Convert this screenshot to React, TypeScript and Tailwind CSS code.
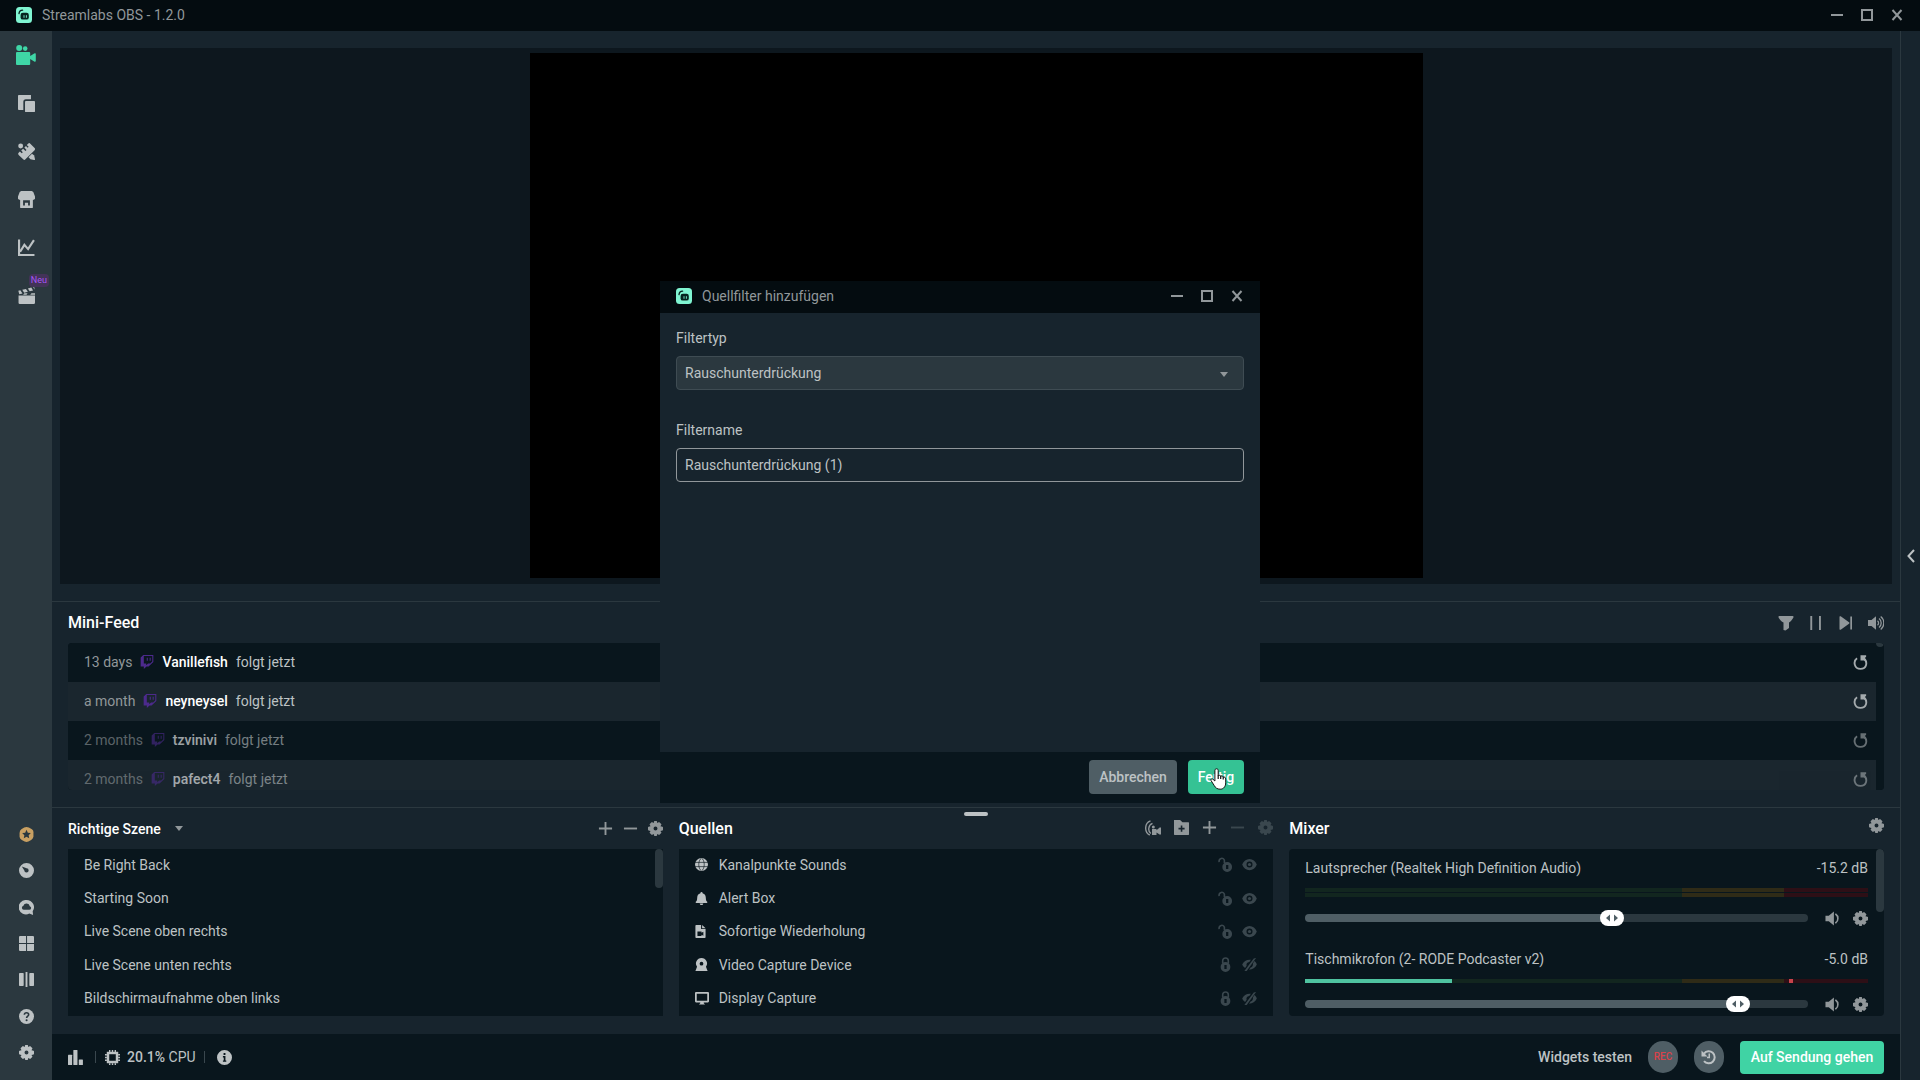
import { useState, type ReactNode } from "react";
import { FaTwitch } from "react-icons/fa";

type IconProps = { className?: string };

function Svg({ className = "size-4", children }: { className?: string; children: ReactNode }) {
  return (
    <svg viewBox="0 0 16 16" fill="currentColor" className={`shrink-0 ${className}`} aria-hidden="true">
      {children}
    </svg>
  );
}

const Logo = () => (
  <Svg className="size-4">
    <rect width="16" height="16" rx="3.5" fill="#80f5d2" />
    <rect x="4.6" y="5.8" width="8.2" height="6.8" rx="2.2" fill="#07241f" />
    <path d="M3 6.6C3.2 4.6 4.6 3.3 6.6 3.2" fill="none" stroke="#07241f" strokeWidth="1.3" strokeLinecap="round" />
    <path d="M8 8.6v1.8M10.4 8.6v1.8" stroke="#80f5d2" strokeWidth="0.9" strokeLinecap="round" />
  </Svg>
);

const Camera = () => (
  <svg viewBox="0 0 20 20" fill="currentColor" className="h-5 w-5" aria-hidden="true">
    <circle cx="3.2" cy="3" r="3" />
    <circle cx="9.2" cy="3.6" r="2.3" />
    <path d="M1 7h12.200a1 1 0 0 1 1 1v3l4-2.600a1 1 0 0 1 1.600.8v6.600a1 1 0 0 1-1.600.8l-4-2.600v5a1 1 0 0 1-1 1H1a1 1 0 0 1-1-1V8a1 1 0 0 1 1-1z" />
  </svg>
);

const Copy = () => (
  <Svg className="size-[17px]">
    <path d="M.8 0h11.400v4H7.400A2.400 2.400 0 0 0 5 6.400V14H.8a.8.8 0 0 1-.8-.8V.8A.8.8 0 0 1 .8 0z" />
    <rect x="6.600" y="5.600" width="9.400" height="10.400" rx=".8" />
  </Svg>
);

const Tools = () => (
  <Svg className="size-[17px]">
    <path d="M9.500.6a1.500 1.500 0 0 1 2.100 0l4 4.200a1.500 1.500 0 0 1 0 2L7 15.400a1.500 1.500 0 0 1-2.100 0L.6 11.200a1.500 1.500 0 0 1 0-2l1.200-1.100 1.700 1.500 1-.9-1.500-1.700L4.800 5.300 7 7.500l1-1L6 4.300l1.500-1.500 1.600 1.600.9-.9-1.700-1.700z" />
    <circle cx="2.500" cy="2.800" r="2.300" />
    <path d="M13.200 10l2 1.800.8 3.400a.8.8 0 0 1-.8.800l-3.500-.8L9.900 13.400z" />
  </Svg>
);

const Store = () => (
  <Svg className="size-[17px]">
    <path
      fillRule="evenodd"
      d="M3 0h10l1.400 1L16 5.200A2.600 2.600 0 0 1 14 8.500v6.700a.8.8 0 0 1-.8.8H2.800a.8.8 0 0 1-.8-.8V8.500A2.600 2.600 0 0 1 0 5.200L1.600 1zM4.800 8.700v5h1.700v-2.700h3v2.700h1.700v-5z"
    />
  </Svg>
);

const Chart = () => (
  <Svg className="size-[17px]">
    <path d="M1 .5V15h14.500M2 12l4-6.500L9.500 9.500 15 1" fill="none" stroke="currentColor" strokeWidth="2" />
  </Svg>
);

const Clapper = () => (
  <Svg className="size-[17px]">
    <path d="M.5 8h15.500v6.800a1.200 1.200 0 0 1-1.200 1.200H1.700A1.200 1.200 0 0 1 .5 14.800z" />
    <path d="M.3 3.600 2.200 3.100 4.200 6 1.200 6.800zM4 2.700 7.500 1.800 9.300 4.500 5.800 5.500zM9.300 1.300 12.500.5 14.200 3.200 11 4.100zM14.200.2 15.200 0 15.800 2.700z" />
    <path d="M.5 7.200h4.300l1.200-1.300h3L8 7.200h3.500l1.200-1.400H16v1.400z" />
  </Svg>
);

const Prime = () => (
  <Svg className="size-[15px]">
    <path fillRule="evenodd" d="M5.500.6Q8-.6 10.500.6l3.300 1.900Q15.800 4 15.400 6.500v4Q15 12.700 13 13.800l-3 1.700q-2 1-4 0l-3-1.700Q.6 12.500.6 10.300v-4Q.7 4 2.500 2.500zM8 3 6.600 6l-3.200.4 2.300 2.300-.6 3.200L8 10.400l2.900 1.500-.6-3.200 2.300-2.300L9.400 6z" />
  </Svg>
);

const Dashboard = () => (
  <Svg className="size-[15px]">
    <path fillRule="evenodd" d="M8 0a8 8 0 1 1 0 16A8 8 0 0 1 8 0zM3 3.600 5.700 7.900a2.300 2.300 0 1 0 2.400-2.300z" />
  </Svg>
);

const Cloud = () => (
  <Svg className="size-[15px]">
    <path fillRule="evenodd" d="M8 0a8 7.700 0 0 1 6.600 12L15 16l-4-1.500A7.800 7.700 0 1 1 8 0zM5 10.500h6a2 2 0 0 0 .5-3.900 3.500 3.500 0 0 0-6.800-.4A2.200 2.200 0 0 0 5 10.500z" />
  </Svg>
);

const Grid = () => (
  <Svg className="size-[15px]">
    <path d="M.8 0H7.500v7.400H0V.8zM8.600 0h6.600l.8.8v6.600H8.600zM0 8.500h7.500V16H.8l-.8-.8zM8.600 8.500H16v6.700l-.8.8H8.600z" />
  </Svg>
);

const Columns = () => (
  <Svg className="size-[15px]">
    <rect y="1" width="5" height="14" rx=".8" />
    <rect x="7" width="2" height="16" />
    <rect x="11" y="1" width="5" height="14" rx=".8" />
  </Svg>
);

const Help = () => (
  <Svg className="size-[15px]">
    <circle cx="8" cy="8" r="8" />
    <path d="M5.700 6.200C5.800 4.600 6.800 4 8 4s2.300.8 2.300 2c0 1.600-2.200 1.700-2.200 3.600" fill="none" stroke="#2b383f" strokeWidth="1.700" />
    <circle cx="8.100" cy="12" r="1.100" fill="#2b383f" />
  </Svg>
);

const Gear = ({ className = "size-[15px]" }: IconProps) => (
  <Svg className={className}>
    <path fillRule="evenodd" d="M6.600 0h2.800l.5 2.100 1.900-1.100 2.600 2.500-1.100 2 2.200.6.500.6v2.700l-.4.600-2.300.6 1.100 2-2.500 2.400-2-1.100L9.300 16H6.700L6.100 13.900 4.100 15l-2.500-2.400 1.100-2L.5 10 0 9.400V6.700l.5-.6L2.700 5.500 1.600 3.500l2.500-2.500 2 1.100zM8 5.900a2.100 2.100 0 1 0 0 4.200 2.100 2.100 0 0 0 0-4.200z" />
  </Svg>
);

const Plus = () => (
  <Svg className="size-[15px]">
    <path d="M7 1h2v6h6v2H9v6H7V9H1V7h6z" />
  </Svg>
);

const Minus = () => (
  <Svg className="size-[15px]">
    <path d="M1 7h14v2H1z" />
  </Svg>
);

const Filter = () => (
  <Svg>
    <path d="M1.200 1h13.600a.8.8 0 0 1 .7 1.200C14.300 5 12.500 6.500 11 7.500V13l-3.500 2.600-2-.6V7.500C3.500 6.500 1.700 5 .5 2.200A.8.8 0 0 1 1.200 1z" />
  </Svg>
);

const Pause = () => (
  <Svg>
    <path d="M2.300 1h1.900v14H2.300zM11 1h1.900v14H11z" />
  </Svg>
);

const Skip = () => (
  <Svg>
    <path d="M1.500 2a.8.8 0 0 1 1.200-.7L11 7.300a.8.8 0 0 1 0 1.400l-8.300 6a.8.8 0 0 1-1.200-.7zM12.300 1.500H14v13h-1.700z" />
  </Svg>
);

const Volume = () => (
  <Svg>
    <path d="M0 5h3.500L8 1.300V14.700L3.500 11H0z" />
    <path d="M9.500 5.700a3 3 0 0 1 0 4.600M11 3.600a5.500 5.500 0 0 1 0 8.800M12.700 1.500a8.300 8.300 0 0 1 0 13" fill="none" stroke="currentColor" strokeWidth="1.300" />
  </Svg>
);

const Speaker = () => (
  <Svg className="size-[15px]">
    <path d="M.5 5H4l5.500-4.500v15L4 11H.5z" />
    <path d="M11.500 3.500c3 2 3 7 0 9" fill="none" stroke="currentColor" strokeWidth="1.700" strokeLinecap="round" />
  </Svg>
);

const Replay = () => (
  <Svg className="size-[15px]">
    <path d="M4.300 3.500C0 6.500 1 14.800 8 14.800c6.500 0 7.800-7 4-10.500" fill="none" stroke="currentColor" strokeWidth="2" />
    <path d="M8 .3h6v1.500L12.700 3.200 14.200 5v.8H8z" />
  </Svg>
);

const Globe = () => (
  <Svg className="size-[13px]">
    <circle cx="8" cy="8" r="8" />
    <path d="M0 5.400h16M0 10.600h16M8 0C3.500 3 3.500 13 8 16M8 0c4.500 3 4.500 13 0 16" fill="none" stroke="#09161d" strokeWidth="0.800" />
  </Svg>
);

const Bell = () => (
  <Svg className="size-[13px]">
    <path d="M8 0a1.300 1.300 0 0 1 1.300 1.500C12 2.200 13.300 4.300 13.300 7c0 3 .7 4 1.700 5a.9.9 0 0 1-.6 1.500H1.600A.9.9 0 0 1 1 12c1-1 1.700-2 1.700-5 0-2.700 1.300-4.800 4-5.500A1.300 1.300 0 0 1 8 0zM5.800 14.300h4.400a2.200 1.900 0 0 1-4.400 0z" />
  </Svg>
);

const ReplayFile = () => (
  <Svg className="size-[13px]">
    <path fillRule="evenodd" d="M1.500 0H7.500v5h5.500v10a1 1 0 0 1-1 1H1.500a1 1 0 0 1-1-1V1a1 1 0 0 1 1-1zM3 8v5.500h5V12l2.300 1.300V8.200L8 9.500V8z" />
    <path d="M8.800 0 13 3.900H8.800z" />
  </Svg>
);

const Webcam = () => (
  <Svg className="size-[13px]">
    <path fillRule="evenodd" d="M8 0a6.800 6.800 0 0 1 5.500 10.800l2 5.200H.5l2-5.200A6.800 6.800 0 0 1 8 0zM8 4.700a2.300 2.300 0 1 0 0 4.600A2.300 2.300 0 0 0 8 4.700z" />
  </Svg>
);

const Monitor = () => (
  <Svg className="size-[14px]">
    <path fillRule="evenodd" d="M1.200 1h13.600A1.200 1.200 0 0 1 16 2.200v9.600a1.200 1.200 0 0 1-1.200 1.200H10v1l1.500 1.500H4.500L6 14v-1H1.200A1.200 1.200 0 0 1 0 11.800V2.200A1.200 1.200 0 0 1 1.200 1zm.8 2v8h12V3z" />
  </Svg>
);

const Unlocked = () => (
  <Svg className="size-[15px]">
    <path d="M1.200 5.500C.5 1 6 0 6.800 3.500v3" fill="none" stroke="currentColor" strokeWidth="1.700" />
    <path fillRule="evenodd" d="M9.800 5.300a5.200 5.300 0 1 1 0 10.600 5.200 5.300 0 0 1 0-10.600zm-1.200 3.200v4.200h2.400v-4.200z" />
  </Svg>
);

const Locked = () => (
  <Svg className="size-[15px]">
    <path d="M5 7V4c0-4 6-4 6 0v3" fill="none" stroke="currentColor" strokeWidth="1.700" />
    <path fillRule="evenodd" d="M8 5.300a5.200 5.300 0 1 1 0 10.600A5.200 5.300 0 0 1 8 5.300zm-1.200 3.200v4.200h2.400v-4.200z" />
  </Svg>
);

const Eye = () => (
  <Svg className="size-[15px]">
    <path fillRule="evenodd" d="M8 2c3.600 0 6.300 2.200 7.800 6-1.500 3.800-4.200 6-7.800 6S1.700 11.800.2 8C1.700 4.200 4.400 2 8 2zM8 4.800a3.200 3.200 0 1 0 0 6.400 3.200 3.200 0 0 0 0-6.400z" />
    <circle cx="8" cy="8" r="1.700" />
  </Svg>
);

const EyeOff = () => (
  <Svg className="size-[15px]">
    <path d="M12.500 1.500 15 1 5 15H2.500zM.2 8C2 4.500 5 2.500 9.500 3L7.800 5.200C5 5.500 4.300 8 5 9.200L3.300 11.700C2 11 .8 9.500.2 8zM13.200 4.300C14.500 5.200 15.400 6.500 15.800 8c-1.600 3.500-4.500 5.500-8.300 5.500l1.700-2.400C11.200 10.800 12 9 11.600 7z" />
  </Svg>
);

const StreamCam = () => (
  <Svg className="size-4">
    <path d="M5.500.8C-.8 3-.8 12.500 4.800 15M7.500 3.300c-4.500 1.700-4.800 8-1.700 10.200" fill="none" stroke="currentColor" strokeWidth="1.400" />
    <circle cx="8.300" cy="7" r="1.500" />
    <path d="M7 9h4.500v1.300L15 7.200l1 .5v6.600l-1 .5-3.500-2.300V15H7z" />
  </Svg>
);

const FolderAdd = () => (
  <Svg className="size-[15px]">
    <path fillRule="evenodd" d="M0 0h6.500L9 2.500h6.500L16 3v12.500l-.5.500H.5L0 15.500zM7.200 5.800v2.500H4.800v1.700h2.400v2.500h1.700V10h2.400V8.300H8.900V5.800z" />
  </Svg>
);

const Bars = () => (
  <Svg className="size-[15px]">
    <rect y="5" width="4.400" height="11" rx=".6" />
    <rect x="5.700" width="4.400" height="16" rx=".6" />
    <rect x="11.500" y="10" width="4.400" height="6" rx=".6" />
  </Svg>
);

const Chip = () => (
  <Svg className="size-[15px]">
    <rect x="3.200" y="3.200" width="9.600" height="9.600" fill="none" stroke="currentColor" strokeWidth="2.600" />
    <path d="M5 0v2M8 0v2M11 0v2M5 14v2M8 14v2M11 14v2M0 5h2M0 8h2M0 11h2M14 5h2M14 8h2M14 11h2" stroke="currentColor" strokeWidth="1.500" fill="none" />
  </Svg>
);

const Info = () => (
  <Svg className="size-[15px]">
    <path fillRule="evenodd" d="M8 0a8 8 0 1 1 0 16A8 8 0 0 1 8 0zM7 3.200v2h2v-2zM6.300 6.500v1.400h.9v3.300h-.9v1.400h3.600v-1.400H9V6.500z" />
  </Svg>
);

const History = () => (
  <Svg>
    <path d="M3 4.500A6 6 0 1 1 3 12" fill="none" stroke="currentColor" strokeWidth="2" />
    <path d="M.5 1.500v6h6zM7.500 4.500H9v4.700H6V7.800h1.500z" />
  </Svg>
);

const Caret = () => (
  <svg viewBox="0 0 10 6" fill="#91979a" className="h-[5px] w-2" aria-hidden="true">
    <path d="M0 0h10L5 6z" />
  </svg>
);

const topNav = [
  { label: "Editor", icon: <Camera />, active: true },
  { label: "Layout", icon: <Copy /> },
  { label: "Themes", icon: <Tools /> },
  { label: "App Store", icon: <Store /> },
  { label: "Statistik", icon: <Chart /> },
  { label: "Highlighter", icon: <Clapper />, badge: "Neu" },
];

const bottomNav = [
  { label: "Prime", icon: <Prime />, prime: true },
  { label: "Dashboard", icon: <Dashboard /> },
  { label: "Cloudbot", icon: <Cloud /> },
  { label: "Layout-Editor", icon: <Grid /> },
  { label: "Studio-Modus", icon: <Columns /> },
  { label: "Hilfe", icon: <Help /> },
  { label: "Einstellungen", icon: <Gear /> },
];

const feed = [
  { time: "13 days", name: "Vanillefish", faded: false },
  { time: "a month", name: "neyneysel", faded: false },
  { time: "2 months", name: "tzvinivi", faded: true },
  { time: "2 months", name: "pafect4", faded: true },
];

const scenes = ["Be Right Back", "Starting Soon", "Live Scene oben rechts", "Live Scene unten rechts", "Bildschirmaufnahme oben links"];

const sources = [
  { name: "Kanalpunkte Sounds", icon: <Globe />, locked: false },
  { name: "Alert Box", icon: <Bell />, locked: false },
  { name: "Sofortige Wiederholung", icon: <ReplayFile />, locked: false },
  { name: "Video Capture Device", icon: <Webcam />, locked: true },
  { name: "Display Capture", icon: <Monitor />, locked: true },
];

function IconButton({ label, dim, children }: { label: string; dim?: boolean; children: ReactNode }) {
  return (
    <button type="button" aria-label={label} className={dim ? "text-[#3a474e]" : "text-[#91979a]"}>
      {children}
    </button>
  );
}

function WindowControls() {
  return (
    <div className="flex items-center gap-[18px] text-[#91979a]">
      <button type="button" aria-label="Minimieren">
        <svg viewBox="0 0 12 12" className="size-3"><path d="M0 6h12" stroke="currentColor" strokeWidth="2" /></svg>
      </button>
      <button type="button" aria-label="Maximieren">
        <svg viewBox="0 0 12 12" className="size-3"><path d="M1 1h10v10H1z" fill="none" stroke="currentColor" strokeWidth="2" /></svg>
      </button>
      <button type="button" aria-label="Schließen">
        <svg viewBox="0 0 12 12" className="size-3"><path d="M1.500 1l9 10M10.500 1l-9 10" stroke="currentColor" strokeWidth="2" /></svg>
      </button>
    </div>
  );
}

function SideNav() {
  return (
    <nav className="flex w-[52px] shrink-0 flex-col justify-between bg-[#2b383f] pb-[9px] text-[#bdc2c4]">
      <div className="flex flex-col">
        {topNav.map((item) => (
          <button
            key={item.label}
            type="button"
            aria-label={item.label}
            className={`relative flex h-12 items-center justify-center ${item.active ? "text-[#3fd6a6]" : ""}`}
          >
            {item.icon}
            {item.badge && (
              <span className="absolute top-[3px] right-[3px] rounded-sm bg-[#433358] px-[2px] text-[9px] leading-[13px] text-[#a855f7]">
                {item.badge}
              </span>
            )}
          </button>
        ))}
      </div>
      <div className="flex h-[255px] flex-col">
        {bottomNav.map((item) => (
          <button
            key={item.label}
            type="button"
            aria-label={item.label}
            className={`flex flex-1 items-center justify-center ${item.prime ? "text-[#c9a062]" : ""}`}
          >
            {item.icon}
          </button>
        ))}
      </div>
    </nav>
  );
}

function MiniFeed() {
  return (
    <section className="border-t border-[#2b383f] px-4 pb-[17px]">
      <header className="flex h-[41px] items-center justify-between">
        <h2 className="text-base font-medium text-white">Mini-Feed</h2>
        <div className="flex gap-[14px]">
          <IconButton label="Filter"><Filter /></IconButton>
          <IconButton label="Pause"><Pause /></IconButton>
          <IconButton label="Überspringen"><Skip /></IconButton>
          <IconButton label="Ton"><Volume /></IconButton>
        </div>
      </header>
      <div className="flex h-[147px] overflow-hidden rounded-[4px] bg-[#09161d]">
        <ul className="flex-1">
          {feed.map((event, i) => (
            <li key={event.name} className={i % 2 ? "bg-[#1a262e]" : "bg-[#09161d]"}>
              <div className={`flex h-[39px] items-center pr-2 pb-px pl-4 text-sm ${event.faded ? "opacity-60" : ""}`}>
                <span className="text-[#91979a]">{event.time}</span>
                <FaTwitch className="mx-2 size-[14px] text-[#4c2a8c]" />
                <span className="mr-2 font-medium text-white">{event.name}</span>
                <span className="text-[#bdc2c4]">folgt jetzt</span>
                <button type="button" aria-label="Wiederholen" className="ml-auto text-[#a4aaad]">
                  <Replay />
                </button>
              </div>
            </li>
          ))}
        </ul>
        <div className="w-2 bg-[#09161d]">
          <div className="h-1 rounded-b bg-[#2b383f]" />
        </div>
      </div>
    </section>
  );
}

function Scenes() {
  return (
    <section>
      <header className="flex h-[41px] items-center justify-between">
        <button type="button" className="flex items-center gap-[14px] text-sm font-medium text-white">
          Richtige Szene <Caret />
        </button>
        <div className="flex gap-[10px]">
          <IconButton label="Szene hinzufügen"><Plus /></IconButton>
          <IconButton label="Szene entfernen"><Minus /></IconButton>
          <IconButton label="Szene bearbeiten"><Gear /></IconButton>
        </div>
      </header>
      <div className="flex h-[167px] bg-[#09161d]">
        <ul className="grid flex-1 grid-rows-5">
          {scenes.map((scene) => (
            <li key={scene} className="flex items-center pb-[2px] pl-4 text-sm">{scene}</li>
          ))}
        </ul>
        <div className="h-[39px] w-2 rounded bg-[#2b383f]" />
      </div>
    </section>
  );
}

function Sources() {
  return (
    <section>
      <header className="flex h-[41px] items-center justify-between">
        <h2 className="text-base font-medium text-white">Quellen</h2>
        <div className="flex items-center gap-[13px] pb-[2px]">
          <IconButton label="Selective Recording"><StreamCam /></IconButton>
          <IconButton label="Gruppe hinzufügen"><FolderAdd /></IconButton>
          <IconButton label="Quelle hinzufügen"><Plus /></IconButton>
          <IconButton label="Quelle entfernen" dim><Minus /></IconButton>
          <IconButton label="Quelle bearbeiten" dim><Gear /></IconButton>
        </div>
      </header>
      <ul className="grid h-[167px] grid-rows-5 bg-[#09161d]">
        {sources.map((source) => (
          <li key={source.name} className="flex items-center px-4 pb-[2px] text-sm">
            <span className="w-6">{source.icon}</span>
            <span className="flex-1">{source.name}</span>
            <span className="flex gap-[9px]">
              <IconButton label="Sperren" dim>{source.locked ? <Locked /> : <Unlocked />}</IconButton>
              <IconButton label="Sichtbarkeit" dim>{source.locked ? <EyeOff /> : <Eye />}</IconButton>
            </span>
          </li>
        ))}
      </ul>
    </section>
  );
}

function Meter({ level = 0, peak }: { level?: number; peak?: number }) {
  return (
    <div className="relative flex h-1">
      <div className="w-[67%] bg-[#12261f]" />
      <div className="w-[18%] bg-[#2f2b17]" />
      <div className="w-[15%] bg-[#2d0f16]" />
      <div className="absolute inset-y-0 left-0 bg-[#4fc3a0]" style={{ width: `${level}%` }} />
      {peak !== undefined && <div className="absolute inset-y-0 w-1 bg-[#c8434b]" style={{ left: `${peak}%` }} />}
    </div>
  );
}

type Channel = { id: string; name: string; db: string; volume: number; stereo?: boolean; level?: number; peak?: number };

const channels: Channel[] = [
  { id: "speaker", name: "Lautsprecher (Realtek High Definition Audio)", db: "-15.2 dB", volume: 616, stereo: true },
  { id: "mic", name: "Tischmikrofon (2- RODE Podcaster v2)", db: "-5.0 dB", volume: 879, level: 26, peak: 86 },
];

function MixerChannel({ channel }: { channel: Channel }) {
  const [volume, setVolume] = useState(channel.volume);
  const pct = volume / 10;

  return (
    <div className="text-sm">
      <div className="flex justify-between leading-5">
        <label htmlFor={channel.id}>{channel.name}</label>
        <span>{channel.db}</span>
      </div>
      <div className="mt-[10px] flex flex-col gap-px">
        <Meter level={channel.level} peak={channel.peak} />
        {channel.stereo && <Meter />}
      </div>
      <div className="mt-[11px] flex h-5 items-center">
        <div className="relative mr-[17px] flex h-5 flex-1 items-center">
          <input
            id={channel.id}
            type="range"
            min={0}
            max={1000}
            value={volume}
            onChange={(e) => setVolume(Number(e.target.value))}
            style={{ backgroundImage: `linear-gradient(to right, #4f5e65 ${pct}%, #2b383f ${pct}%)` }}
            className="h-2 w-full appearance-none rounded-full [&::-webkit-slider-thumb]:h-4 [&::-webkit-slider-thumb]:w-6 [&::-webkit-slider-thumb]:appearance-none [&::-webkit-slider-thumb]:rounded-full [&::-webkit-slider-thumb]:bg-white"
          />
          <svg
            viewBox="0 0 24 16"
            className="pointer-events-none absolute top-[2px] h-4 w-6"
            style={{ left: `calc(${volume / 1000} * (100% - 24px))` }}
            aria-hidden="true"
          >
            <path d="M10 4.500v7L6 8zM14 4.500v7L18 8z" fill="#4f5e65" />
          </svg>
        </div>
        <div className="flex gap-[13px]">
          <IconButton label="Stummschalten"><Speaker /></IconButton>
          <IconButton label="Audioeinstellungen"><Gear /></IconButton>
        </div>
      </div>
    </div>
  );
}

function Mixer() {
  return (
    <section>
      <header className="flex h-[41px] items-center justify-between">
        <h2 className="text-base font-medium text-white">Mixer</h2>
        <div className="pb-[2px]">
          <IconButton label="Mixer-Einstellungen"><Gear /></IconButton>
        </div>
      </header>
      <div className="flex h-[167px] overflow-hidden rounded-[4px] bg-[#09161d]">
        <div className="flex flex-1 flex-col gap-[21px] pt-[9px] pr-2 pl-4">
          {channels.map((channel) => (
            <MixerChannel key={channel.id} channel={channel} />
          ))}
        </div>
        <div className="h-[63px] w-2 rounded bg-[#2b383f]" />
      </div>
    </section>
  );
}

function Footer() {
  return (
    <footer className="flex h-[46px] items-center justify-between bg-[#09161d] px-4 text-sm">
      <div className="flex items-center">
        <Bars />
        <span className="mr-[9px] ml-3 h-3 w-px bg-[#3a474e]" />
        <Chip />
        <span className="ml-[7px]"><span className="font-medium">20.1%</span> CPU</span>
        <span className="mr-3 ml-2 h-3 w-px bg-[#3a474e]" />
        <Info />
      </div>
      <div className="flex items-center gap-4">
        <button type="button" className="font-medium">Widgets testen</button>
        <button type="button" className="h-8 w-[30px] rounded-full bg-[#4f5e65] text-[10px] font-medium text-[#d8434b]">REC</button>
        <button type="button" aria-label="Replay-Puffer" className="flex h-8 w-[30px] items-center justify-center rounded-full bg-[#4f5e65]">
          <History />
        </button>
        <button type="button" className="h-[33px] w-36 rounded-[4px] bg-[#40d3a4] font-medium text-white">Auf Sendung gehen</button>
      </div>
    </footer>
  );
}

function FilterDialog() {
  return (
    <div className="fixed inset-0 flex items-center justify-center pt-1">
      <div role="dialog" aria-labelledby="dialog-title" className="flex h-[522px] w-[600px] flex-col bg-[#17242d] text-sm">
        <header className="flex h-8 items-center justify-between bg-[#040c10] pr-[17px] pb-[2px] pl-4 text-[#91979a]">
          <div className="flex items-center gap-[10px]">
            <Logo />
            <h1 id="dialog-title">Quellfilter hinzufügen</h1>
          </div>
          <WindowControls />
        </header>
        <div className="flex flex-1 flex-col px-4 pt-[15px]">
          <label htmlFor="filter-type" className="leading-5">Filtertyp</label>
          <div className="relative mt-2 flex">
            <select id="filter-type" className="h-[34px] w-full appearance-none rounded-[4px] border border-[#3f4c53] bg-[#2b383f] px-2">
              <option>Rauschunterdrückung</option>
            </select>
            <span className="pointer-events-none absolute top-4 right-4"><Caret /></span>
          </div>
          <label htmlFor="filter-name" className="mt-[30px] leading-5">Filtername</label>
          <input
            id="filter-name"
            type="text"
            defaultValue="Rauschunterdrückung (1)"
            className="mt-2 h-[34px] rounded-[4px] border border-[#91979a] bg-transparent px-2 outline-none"
          />
        </div>
        <footer className="flex h-[51px] items-center justify-end gap-[11px] bg-[#09161d] px-4 pb-[2px] font-medium">
          <button type="button" className="h-[34px] w-[88px] rounded-[4px] bg-[#4f5e65]">Abbrechen</button>
          <button type="button" className="relative h-[34px] w-14 rounded-[4px] bg-[#35c294] text-white">
            Fertig
            <svg viewBox="0 0 18 22" className="absolute top-2 left-[22px] h-[22px] w-[18px]" aria-hidden="true">
              <path
                d="M6.500.8c1.200 0 1.700.8 1.700 1.800v4.700c1.600-.3 2.300.2 2.500.8 1.400-.3 2 .2 2.300.9 1.600-.3 2.700.4 2.700 2v3.800c0 3.500-2 6.400-5.500 6.400-3 0-4.800-1.400-6-3.700L1 12.500c-.5-1.300.9-2.200 1.900-1.300L4.900 13V2.600c0-1 .6-1.800 1.600-1.800z"
                fill="#fff"
                stroke="#111"
                strokeWidth="1"
              />
              <path d="M8.200 7v4M10.700 8v3M13.200 9v2.500" stroke="#111" strokeWidth="1.200" />
            </svg>
          </button>
        </footer>
      </div>
    </div>
  );
}

export default function App() {
  return (
    <div className="flex min-h-screen flex-col bg-[#17242d] font-[Roboto,sans-serif] text-[#bdc2c4]">
      <header className="flex h-[31px] items-center justify-between bg-[#040c10] pr-[17px] pb-[2px] pl-4 text-sm text-[#91979a]">
        <div className="flex items-center gap-[10px]">
          <Logo />
          <span>Streamlabs OBS - 1.2.0</span>
        </div>
        <WindowControls />
      </header>

      <div className="flex flex-1">
        <SideNav />

        <main className="flex min-w-0 flex-1 flex-col">
          <div className="flex flex-1 px-2 py-[17px]">
            <div className="flex flex-1 justify-center bg-[#0d171e] pt-[5px] pb-[6px]">
              <div className="aspect-[893/525] bg-black" />
            </div>
          </div>

          <MiniFeed />

          <div className="relative grid grid-cols-3 gap-4 border-t border-[#2b383f] px-4 pb-[18px]">
            <div className="absolute top-1 left-1/2 h-1 w-6 -translate-x-1/2 rounded-full bg-[#bdc2c4]" />
            <Scenes />
            <Sources />
            <Mixer />
          </div>

          <Footer />
        </main>

        <aside className="flex w-5 shrink-0 items-center justify-center border-l border-[#2b383f]">
          <button type="button" aria-label="Live-Dock öffnen" className="text-[#bdc2c4]">
            <svg viewBox="0 0 8 14" className="h-[14px] w-2"><path d="M7 1 1.500 7 7 13" fill="none" stroke="currentColor" strokeWidth="2" /></svg>
          </button>
        </aside>
      </div>

      <FilterDialog />
    </div>
  );
}
